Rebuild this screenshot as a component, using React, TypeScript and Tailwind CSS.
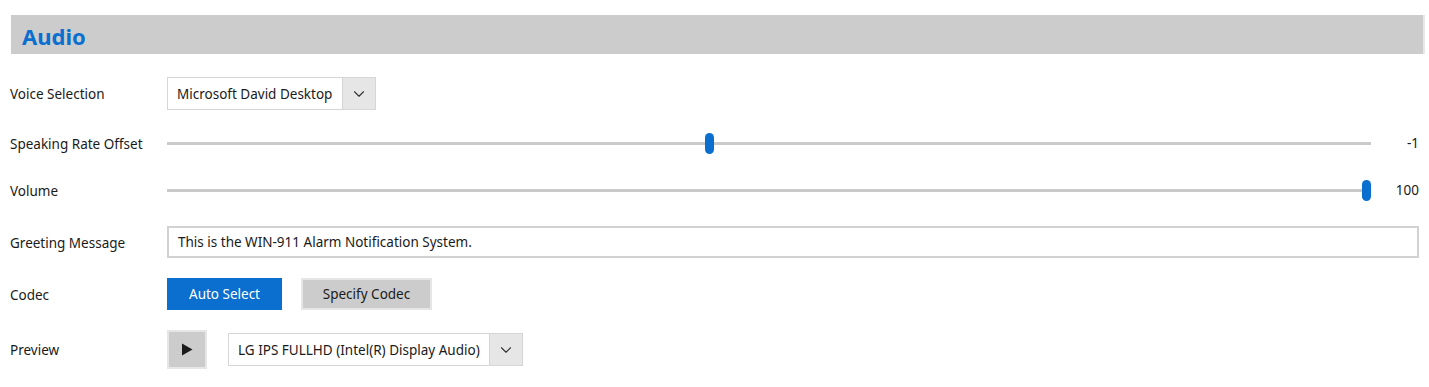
import { ChevronDown } from 'lucide-react';

function Dropdown({ label, width }: { label: string; width: string }) {
  return (
    <div className={`flex h-[33px] ${width} border border-[#d6d6d6] bg-white`}>
      <div className="flex flex-1 items-center pl-[9px] pt-[1px] text-[13.5px] text-[#1a1a1a] whitespace-nowrap">{label}</div>
      <div className="flex w-[33px] items-center justify-center border-l border-[#d6d6d6] bg-[#e6e6e6]">
        <ChevronDown size={18} strokeWidth={1.5} className="text-[#333]" />
      </div>
    </div>
  );
}

function Slider({ min, max, value }: { min: number; max: number; value: number }) {
  const pct = (value - min) / (max - min);
  return (
    <div className="flex flex-1 items-center">
      <div className="relative h-[21px] flex-1">
        <div className="absolute left-0 right-0 top-[9px] h-[3px] bg-[#cacaca]" />
        <div
          className="absolute top-0 h-[21px] w-[9px] rounded-full bg-[#0a6fce]"
          style={{ left: `calc(${pct} * (100% - 9px))` }}
        />
      </div>
      <div className="w-[48px] text-right text-[13.5px] text-[#1a1a1a]">{value}</div>
    </div>
  );
}

function Row({ label, className, children }: { label: string; className: string; children: React.ReactNode }) {
  return (
    <div className={`flex items-center ${className}`}>
      <div className="w-[157px] pt-[2px] text-[13.5px] text-[#1a1a1a]">{label}</div>
      <div className="flex flex-1 items-center">{children}</div>
    </div>
  );
}

export default function App() {
  return (
    <div className="min-h-screen bg-white pt-[15px] pl-[10px] pr-[10px]" style={{ fontFamily: '"Noto Sans", sans-serif' }}>
      {/* Section header */}
      <div className="ml-[1px] mr-[-6px] flex h-[39px] items-center border-r-2 border-[#e8e8e8] bg-[#cccccc] pl-[11px] pt-[3px]">
        <h1 className="text-[22px] font-bold text-[#0a6fce]">Audio</h1>
      </div>

      <Row label="Voice Selection" className="mt-[23px] h-[33px]">
        <Dropdown label="Microsoft David Desktop" width="w-[209px]" />
      </Row>

      <Row label="Speaking Rate Offset" className="mt-[16px] h-[34px]">
        <Slider min={-10} max={10} value={-1} />
      </Row>

      <Row label="Volume" className="mt-[13px] h-[34px]">
        <Slider min={0} max={100} value={100} />
      </Row>

      <Row label="Greeting Message" className="mt-[19px] h-[32px]">
        <div className="flex h-[32px] flex-1 items-center border-2 border-[#d2d2d2] pl-[9px] pt-[1px] text-[13.5px] text-[#1a1a1a]">
          This is the WIN-911 Alarm Notification System.
        </div>
      </Row>

      <Row label="Codec" className="mt-[20px] h-[32px]">
        <div className="flex gap-[19px]">
          <button className="h-[32px] w-[115px] bg-[#0a6fce] pt-[1px] text-[13.5px] text-white">Auto Select</button>
          <button className="h-[32px] w-[131px] border-2 border-[#e6e6e6] bg-[#cccccc] pt-[1px] text-[13.5px] text-[#1a1a1a]">
            Specify Codec
          </button>
        </div>
      </Row>

      <Row label="Preview" className="mt-[20px] h-[39px]">
        <div className="flex items-center gap-[21px]">
          <button className="flex h-[39px] w-[40px] items-center justify-center border-2 border-[#e6e6e6] bg-[#cccccc]">
            <svg width="12" height="13" viewBox="0 0 12 13">
              <path d="M1 0.5 L11.5 6.5 L1 12.5 Z" fill="#1a1a1a" />
            </svg>
          </button>
          <Dropdown label="LG IPS FULLHD (Intel(R) Display Audio)" width="w-[295px]" />
        </div>
      </Row>
    </div>
  );
}
